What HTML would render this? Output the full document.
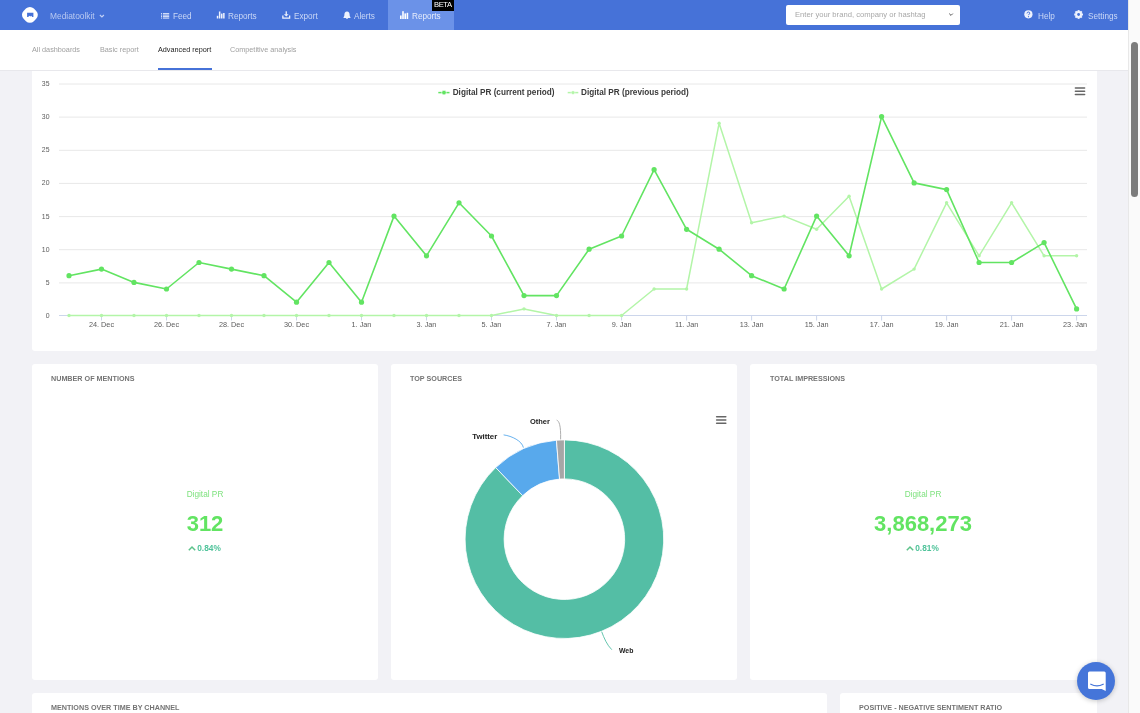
<!DOCTYPE html>
<html><head><meta charset="utf-8">
<style>
*{box-sizing:border-box;margin:0;padding:0}
html,body{width:1140px;height:713px;overflow:hidden;background:#f2f2f6;font-family:"Liberation Sans",sans-serif;position:relative}
.abs{position:absolute}
.nv,.tab,.ct,.big,.dp,.pc,.abs,svg{will-change:transform}
#nav{position:absolute;left:0;top:0;width:1128px;height:30px;background:#4672d8}
.nv{position:absolute;top:10.8px;font-size:8.2px;color:#cbd8f6;white-space:nowrap;line-height:12px}
#sub{position:absolute;left:0;top:30px;width:1128px;height:41px;background:#fff;border-bottom:1px solid #e8e8ec}
.tab{position:absolute;top:45px;font-size:7.25px;color:#a0a0a0;white-space:nowrap;line-height:10px}
.card{position:absolute;background:#fff;border-radius:3px}
.ct{position:absolute;font-size:7.2px;font-weight:bold;color:#747474;white-space:nowrap;line-height:9px}
.yl{font-size:6.9px;fill:#5c5c5c;font-family:"Liberation Sans",sans-serif}
.xl{font-size:7.3px;fill:#5c5c5c;font-family:"Liberation Sans",sans-serif}
.lg{font-size:8.2px;fill:#3a3a3a;font-weight:bold;font-family:"Liberation Sans",sans-serif}
.dl{font-size:7.7px;fill:#222;font-weight:bold;font-family:"Liberation Sans",sans-serif}
.big{position:absolute;font-size:22px;font-weight:bold;color:#62e462;white-space:nowrap;line-height:24px;text-align:center}
.dp{position:absolute;font-size:8.25px;color:#7fe27f;white-space:nowrap;line-height:12px;text-align:center}
.pc{position:absolute;font-size:8.3px;font-weight:bold;color:#4fc39a;white-space:nowrap;line-height:10px;text-align:center}
#sb{position:absolute;left:1128px;top:0;width:12px;height:713px;background:#fafafa;border-left:1px solid #e8e8e8}
#thumb{position:absolute;left:1131px;top:42px;width:7px;height:155px;background:#7c7c7c;border-radius:4px}
</style></head><body>
<div id="sb"></div><div id="thumb"></div>
<!-- row1 card -->
<div class="card" style="left:32px;top:40px;width:1065px;height:311px"></div>
<!-- row2 -->
<div class="card" style="left:32px;top:364px;width:346px;height:316px"></div>
<div class="card" style="left:391px;top:364px;width:346px;height:316px"></div>
<div class="card" style="left:750px;top:364px;width:347px;height:316px"></div>
<!-- row3 -->
<div class="card" style="left:32px;top:693px;width:795px;height:40px"></div>
<div class="card" style="left:840px;top:693px;width:257px;height:40px"></div>
<div class="ct" style="left:50.5px;top:373.5px">NUMBER OF MENTIONS</div>
<div class="ct" style="left:410px;top:373.5px">TOP SOURCES</div>
<div class="ct" style="left:769.5px;top:373.5px">TOTAL IMPRESSIONS</div>
<div class="ct" style="left:50.5px;top:702.5px">MENTIONS OVER TIME BY CHANNEL</div>
<div class="ct" style="left:859px;top:702.5px">POSITIVE - NEGATIVE SENTIMENT RATIO</div>
<div class="dp" style="left:155px;width:100px;top:489px">Digital PR</div>
<div class="big" style="left:105px;width:200px;top:511.5px">312</div>
<div class="pc" style="left:155px;width:100px;top:543px"><span style="display:inline-block;width:8px"></span>0.84%</div>
<div class="dp" style="left:873px;width:100px;top:489px">Digital PR</div>
<div class="big" style="left:823px;width:200px;top:511.5px">3,868,273</div>
<div class="pc" style="left:873px;width:100px;top:543px"><span style="display:inline-block;width:8px"></span>0.81%</div>
<svg class="abs" style="left:0;top:0" width="1140" height="713" viewBox="0 0 1140 713">
<line x1="59" y1="282.9" x2="1087" y2="282.9" stroke="#e8e8e8" stroke-width="1"/>
<line x1="59" y1="249.7" x2="1087" y2="249.7" stroke="#e8e8e8" stroke-width="1"/>
<line x1="59" y1="216.6" x2="1087" y2="216.6" stroke="#e8e8e8" stroke-width="1"/>
<line x1="59" y1="183.4" x2="1087" y2="183.4" stroke="#e8e8e8" stroke-width="1"/>
<line x1="59" y1="150.3" x2="1087" y2="150.3" stroke="#e8e8e8" stroke-width="1"/>
<line x1="59" y1="117.1" x2="1087" y2="117.1" stroke="#e8e8e8" stroke-width="1"/>
<line x1="59" y1="84.0" x2="1087" y2="84.0" stroke="#e8e8e8" stroke-width="1"/>
<text x="49.5" y="318.0" text-anchor="end" class="yl">0</text>
<text x="49.5" y="284.9" text-anchor="end" class="yl">5</text>
<text x="49.5" y="251.7" text-anchor="end" class="yl">10</text>
<text x="49.5" y="218.6" text-anchor="end" class="yl">15</text>
<text x="49.5" y="185.4" text-anchor="end" class="yl">20</text>
<text x="49.5" y="152.3" text-anchor="end" class="yl">25</text>
<text x="49.5" y="119.1" text-anchor="end" class="yl">30</text>
<text x="49.5" y="86.0" text-anchor="end" class="yl">35</text>
<line x1="59" y1="315.5" x2="1087" y2="315.5" stroke="#ccd6eb" stroke-width="1"/>
<line x1="101.5" y1="315.5" x2="101.5" y2="320.5" stroke="#ccd6eb" stroke-width="1"/>
<text x="101.5" y="327.0" text-anchor="middle" class="xl">24. Dec</text>
<line x1="166.5" y1="315.5" x2="166.5" y2="320.5" stroke="#ccd6eb" stroke-width="1"/>
<text x="166.5" y="327.0" text-anchor="middle" class="xl">26. Dec</text>
<line x1="231.5" y1="315.5" x2="231.5" y2="320.5" stroke="#ccd6eb" stroke-width="1"/>
<text x="231.5" y="327.0" text-anchor="middle" class="xl">28. Dec</text>
<line x1="296.5" y1="315.5" x2="296.5" y2="320.5" stroke="#ccd6eb" stroke-width="1"/>
<text x="296.5" y="327.0" text-anchor="middle" class="xl">30. Dec</text>
<line x1="361.5" y1="315.5" x2="361.5" y2="320.5" stroke="#ccd6eb" stroke-width="1"/>
<text x="361.5" y="327.0" text-anchor="middle" class="xl">1. Jan</text>
<line x1="426.5" y1="315.5" x2="426.5" y2="320.5" stroke="#ccd6eb" stroke-width="1"/>
<text x="426.5" y="327.0" text-anchor="middle" class="xl">3. Jan</text>
<line x1="491.5" y1="315.5" x2="491.5" y2="320.5" stroke="#ccd6eb" stroke-width="1"/>
<text x="491.5" y="327.0" text-anchor="middle" class="xl">5. Jan</text>
<line x1="556.5" y1="315.5" x2="556.5" y2="320.5" stroke="#ccd6eb" stroke-width="1"/>
<text x="556.5" y="327.0" text-anchor="middle" class="xl">7. Jan</text>
<line x1="621.6" y1="315.5" x2="621.6" y2="320.5" stroke="#ccd6eb" stroke-width="1"/>
<text x="621.6" y="327.0" text-anchor="middle" class="xl">9. Jan</text>
<line x1="686.6" y1="315.5" x2="686.6" y2="320.5" stroke="#ccd6eb" stroke-width="1"/>
<text x="686.6" y="327.0" text-anchor="middle" class="xl">11. Jan</text>
<line x1="751.6" y1="315.5" x2="751.6" y2="320.5" stroke="#ccd6eb" stroke-width="1"/>
<text x="751.6" y="327.0" text-anchor="middle" class="xl">13. Jan</text>
<line x1="816.6" y1="315.5" x2="816.6" y2="320.5" stroke="#ccd6eb" stroke-width="1"/>
<text x="816.6" y="327.0" text-anchor="middle" class="xl">15. Jan</text>
<line x1="881.6" y1="315.5" x2="881.6" y2="320.5" stroke="#ccd6eb" stroke-width="1"/>
<text x="881.6" y="327.0" text-anchor="middle" class="xl">17. Jan</text>
<line x1="946.6" y1="315.5" x2="946.6" y2="320.5" stroke="#ccd6eb" stroke-width="1"/>
<text x="946.6" y="327.0" text-anchor="middle" class="xl">19. Jan</text>
<line x1="1011.6" y1="315.5" x2="1011.6" y2="320.5" stroke="#ccd6eb" stroke-width="1"/>
<text x="1011.6" y="327.0" text-anchor="middle" class="xl">21. Jan</text>
<line x1="1076.6" y1="315.5" x2="1076.6" y2="320.5" stroke="#ccd6eb" stroke-width="1"/>
<text x="1087" y="327.0" text-anchor="end" class="xl">23. Jan</text>
<polyline points="69.0,315.5 101.5,315.5 134.0,315.5 166.5,315.5 199.0,315.5 231.5,315.5 264.0,315.5 296.5,315.5 329.0,315.5 361.5,315.5 394.0,315.5 426.5,315.5 459.0,315.5 491.5,315.5 524.0,308.9 556.5,315.5 589.1,315.5 621.6,315.5 654.1,289.0 686.6,289.0 719.1,123.3 751.6,222.7 784.1,216.1 816.6,229.3 849.1,196.2 881.6,289.0 914.1,269.1 946.6,202.8 979.1,255.8 1011.6,202.8 1044.1,255.8 1076.6,255.8" fill="none" stroke="#b3f5a8" stroke-width="1.5" stroke-linejoin="round"/>
<circle cx="69.0" cy="315.5" r="1.7" fill="#b3f5a8"/>
<circle cx="101.5" cy="315.5" r="1.7" fill="#b3f5a8"/>
<circle cx="134.0" cy="315.5" r="1.7" fill="#b3f5a8"/>
<circle cx="166.5" cy="315.5" r="1.7" fill="#b3f5a8"/>
<circle cx="199.0" cy="315.5" r="1.7" fill="#b3f5a8"/>
<circle cx="231.5" cy="315.5" r="1.7" fill="#b3f5a8"/>
<circle cx="264.0" cy="315.5" r="1.7" fill="#b3f5a8"/>
<circle cx="296.5" cy="315.5" r="1.7" fill="#b3f5a8"/>
<circle cx="329.0" cy="315.5" r="1.7" fill="#b3f5a8"/>
<circle cx="361.5" cy="315.5" r="1.7" fill="#b3f5a8"/>
<circle cx="394.0" cy="315.5" r="1.7" fill="#b3f5a8"/>
<circle cx="426.5" cy="315.5" r="1.7" fill="#b3f5a8"/>
<circle cx="459.0" cy="315.5" r="1.7" fill="#b3f5a8"/>
<circle cx="491.5" cy="315.5" r="1.7" fill="#b3f5a8"/>
<circle cx="524.0" cy="308.9" r="1.7" fill="#b3f5a8"/>
<circle cx="556.5" cy="315.5" r="1.7" fill="#b3f5a8"/>
<circle cx="589.1" cy="315.5" r="1.7" fill="#b3f5a8"/>
<circle cx="621.6" cy="315.5" r="1.7" fill="#b3f5a8"/>
<circle cx="654.1" cy="289.0" r="1.7" fill="#b3f5a8"/>
<circle cx="686.6" cy="289.0" r="1.7" fill="#b3f5a8"/>
<circle cx="719.1" cy="123.3" r="1.7" fill="#b3f5a8"/>
<circle cx="751.6" cy="222.7" r="1.7" fill="#b3f5a8"/>
<circle cx="784.1" cy="216.1" r="1.7" fill="#b3f5a8"/>
<circle cx="816.6" cy="229.3" r="1.7" fill="#b3f5a8"/>
<circle cx="849.1" cy="196.2" r="1.7" fill="#b3f5a8"/>
<circle cx="881.6" cy="289.0" r="1.7" fill="#b3f5a8"/>
<circle cx="914.1" cy="269.1" r="1.7" fill="#b3f5a8"/>
<circle cx="946.6" cy="202.8" r="1.7" fill="#b3f5a8"/>
<circle cx="979.1" cy="255.8" r="1.7" fill="#b3f5a8"/>
<circle cx="1011.6" cy="202.8" r="1.7" fill="#b3f5a8"/>
<circle cx="1044.1" cy="255.8" r="1.7" fill="#b3f5a8"/>
<circle cx="1076.6" cy="255.8" r="1.7" fill="#b3f5a8"/>
<polyline points="69.0,275.7 101.5,269.1 134.0,282.4 166.5,289.0 199.0,262.5 231.5,269.1 264.0,275.7 296.5,302.2 329.0,262.5 361.5,302.2 394.0,216.1 426.5,255.8 459.0,202.8 491.5,236.0 524.0,295.6 556.5,295.6 589.1,249.2 621.6,236.0 654.1,169.7 686.6,229.3 719.1,249.2 751.6,275.7 784.1,289.0 816.6,216.1 849.1,255.8 881.6,116.6 914.1,182.9 946.6,189.6 979.1,262.5 1011.6,262.5 1044.1,242.6 1076.6,308.9" fill="none" stroke="#62e462" stroke-width="1.6" stroke-linejoin="round"/>
<circle cx="69.0" cy="275.7" r="2.6" fill="#62e462"/>
<circle cx="101.5" cy="269.1" r="2.6" fill="#62e462"/>
<circle cx="134.0" cy="282.4" r="2.6" fill="#62e462"/>
<circle cx="166.5" cy="289.0" r="2.6" fill="#62e462"/>
<circle cx="199.0" cy="262.5" r="2.6" fill="#62e462"/>
<circle cx="231.5" cy="269.1" r="2.6" fill="#62e462"/>
<circle cx="264.0" cy="275.7" r="2.6" fill="#62e462"/>
<circle cx="296.5" cy="302.2" r="2.6" fill="#62e462"/>
<circle cx="329.0" cy="262.5" r="2.6" fill="#62e462"/>
<circle cx="361.5" cy="302.2" r="2.6" fill="#62e462"/>
<circle cx="394.0" cy="216.1" r="2.6" fill="#62e462"/>
<circle cx="426.5" cy="255.8" r="2.6" fill="#62e462"/>
<circle cx="459.0" cy="202.8" r="2.6" fill="#62e462"/>
<circle cx="491.5" cy="236.0" r="2.6" fill="#62e462"/>
<circle cx="524.0" cy="295.6" r="2.6" fill="#62e462"/>
<circle cx="556.5" cy="295.6" r="2.6" fill="#62e462"/>
<circle cx="589.1" cy="249.2" r="2.6" fill="#62e462"/>
<circle cx="621.6" cy="236.0" r="2.6" fill="#62e462"/>
<circle cx="654.1" cy="169.7" r="2.6" fill="#62e462"/>
<circle cx="686.6" cy="229.3" r="2.6" fill="#62e462"/>
<circle cx="719.1" cy="249.2" r="2.6" fill="#62e462"/>
<circle cx="751.6" cy="275.7" r="2.6" fill="#62e462"/>
<circle cx="784.1" cy="289.0" r="2.6" fill="#62e462"/>
<circle cx="816.6" cy="216.1" r="2.6" fill="#62e462"/>
<circle cx="849.1" cy="255.8" r="2.6" fill="#62e462"/>
<circle cx="881.6" cy="116.6" r="2.6" fill="#62e462"/>
<circle cx="914.1" cy="182.9" r="2.6" fill="#62e462"/>
<circle cx="946.6" cy="189.6" r="2.6" fill="#62e462"/>
<circle cx="979.1" cy="262.5" r="2.6" fill="#62e462"/>
<circle cx="1011.6" cy="262.5" r="2.6" fill="#62e462"/>
<circle cx="1044.1" cy="242.6" r="2.6" fill="#62e462"/>
<circle cx="1076.6" cy="308.9" r="2.6" fill="#62e462"/>
<line x1="438.3" y1="92.6" x2="449.5" y2="92.6" stroke="#62e462" stroke-width="1.5"/><circle cx="444" cy="92.6" r="2.3" fill="#62e462" stroke="#fff" stroke-width="0.6"/>
<text x="452.7" y="95.2" class="lg">Digital PR (current period)</text>
<line x1="567.7" y1="92.6" x2="578.3" y2="92.6" stroke="#b3f5a8" stroke-width="1.5"/><circle cx="573" cy="92.6" r="1.9" fill="#b3f5a8" stroke="#fff" stroke-width="0.5"/>
<text x="581" y="95.2" class="lg">Digital PR (previous period)</text>
<line x1="1075.4" y1="87.90" x2="1084.6000000000001" y2="87.90" stroke="#666" stroke-width="1.5" stroke-linecap="round"/><line x1="1075.4" y1="91.15" x2="1084.6000000000001" y2="91.15" stroke="#666" stroke-width="1.5" stroke-linecap="round"/><line x1="1075.4" y1="94.40" x2="1084.6000000000001" y2="94.40" stroke="#666" stroke-width="1.5" stroke-linecap="round"/>
<line x1="716.6" y1="416.80" x2="725.8000000000001" y2="416.80" stroke="#666" stroke-width="1.5" stroke-linecap="round"/><line x1="716.6" y1="420.05" x2="725.8000000000001" y2="420.05" stroke="#666" stroke-width="1.5" stroke-linecap="round"/><line x1="716.6" y1="423.30" x2="725.8000000000001" y2="423.30" stroke="#666" stroke-width="1.5" stroke-linecap="round"/><path d="M564.40,439.90 A99.3,99.3 0 1 1 495.67,467.53 L522.66,495.68 A60.3,60.3 0 1 0 564.40,478.90 Z" fill="#54bea5" stroke="#fff" stroke-width="0.8" stroke-linejoin="round"/>
<path d="M495.67,467.53 A99.3,99.3 0 0 1 556.44,440.22 L559.56,479.09 A60.3,60.3 0 0 0 522.66,495.68 Z" fill="#58a9ec" stroke="#fff" stroke-width="0.8" stroke-linejoin="round"/>
<path d="M556.44,440.22 A99.3,99.3 0 0 1 564.40,439.90 L564.40,478.90 A60.3,60.3 0 0 0 559.56,479.09 Z" fill="#a6a6a6" stroke="#fff" stroke-width="0.8" stroke-linejoin="round"/>
<path d="M503.6,434.9 C512,436 522,441 523.4,447.6" fill="none" stroke="#58a9ec" stroke-width="0.9"/>
<path d="M556.7,420.1 C559,421 561,425 560.6,439.4" fill="none" stroke="#a6a6a6" stroke-width="0.9"/>
<path d="M601.7,631.7 C604,638 607,645 611.8,649.7" fill="none" stroke="#54bea5" stroke-width="0.9"/>
<text x="472.2" y="439" class="dl" textLength="25.1" lengthAdjust="spacingAndGlyphs">Twitter</text>
<text x="529.9" y="424.3" class="dl" textLength="20" lengthAdjust="spacingAndGlyphs">Other</text>
<text x="619" y="652.9" class="dl" textLength="14.4" lengthAdjust="spacingAndGlyphs">Web</text></svg>
<div id="sub"></div>
<div class="tab" style="left:31.8px">All dashboards</div>
<div class="tab" style="left:100.3px">Basic report</div>
<div class="tab" style="left:158.2px;color:#222">Advanced report</div>
<div class="tab" style="left:229.7px">Competitive analysis</div>
<div class="abs" style="left:158px;top:67.5px;width:53.5px;height:2px;background:#4672d8"></div>
<div id="nav"></div>
<div class="abs" style="left:388px;top:0;width:66px;height:30px;background:#6b92e8"></div>
<div class="abs" style="left:432px;top:0;width:21.7px;height:11px;background:#000;color:#fff;font-size:7.6px;letter-spacing:-0.4px;line-height:10.5px;text-align:center">BETA</div>
<div class="nv" style="left:50px;top:10.4px;font-size:8.4px;color:#b9c9f1">Mediatoolkit</div>
<div class="nv" style="left:172.5px">Feed</div>
<div class="nv" style="left:228.3px">Reports</div>
<div class="nv" style="left:293.8px">Export</div>
<div class="nv" style="left:353.8px">Alerts</div>
<div class="nv" style="left:412px;color:#e6ecfb">Reports</div>
<div class="nv" style="left:1038px">Help</div>
<div class="nv" style="left:1088px">Settings</div>
<div class="abs" style="left:786px;top:5px;width:174px;height:19.5px;background:#fff;border-radius:2px"></div>
<div class="abs" style="left:794.7px;top:10px;font-size:7.65px;line-height:10px;color:#a8a8a8;white-space:nowrap">Enter your brand, company or hashtag</div>
<div class="abs" style="left:1077px;top:662px;width:38px;height:38px;border-radius:50%;background:#4575d9;box-shadow:0 1px 5px rgba(0,0,0,0.22)"></div>
<svg class="abs" style="left:0;top:0" width="1140" height="713" viewBox="0 0 1140 713">
<!-- logo -->
<rect x="22.65" y="7.6" width="14.5" height="14.5" rx="5.6" fill="#fff" transform="rotate(45 29.9 14.85)"/>
<path d="M27.1,12.8 H33.4 V17 L32.3,16.9 L31.2,15.7 L30.25,16.5 L29.3,15.7 L28.2,16.9 L27.1,17 Z" fill="#4672d8"/>
<polyline points="99.9,15 101.9,17 103.9,15" fill="none" stroke="#c0cff5" stroke-width="1.2"/>
<!-- feed -->
<g fill="#dfe7fb">
<rect x="161" y="13.1" width="1.1" height="1"/><rect x="161" y="14.6" width="1.1" height="1"/><rect x="161" y="16.1" width="1.1" height="1"/><rect x="161" y="17.6" width="1.1" height="1"/>
<rect x="163" y="13.1" width="6.2" height="1"/><rect x="163" y="14.6" width="6.2" height="1"/><rect x="163" y="16.1" width="6.2" height="1"/><rect x="163" y="17.6" width="6.2" height="1"/>
</g>
<!-- reports icon -->
<g fill="#eef2fd">
<rect x="216.8" y="15.8" width="1.5" height="2.7"/><rect x="218.9" y="11.5" width="1.5" height="7"/><rect x="221" y="13.6" width="1.5" height="4.9"/><rect x="223.1" y="13" width="1.5" height="5.5"/>
</g>
<g fill="#fff">
<rect x="400" y="15.5" width="1.6" height="3.5"/><rect x="402.2" y="11.2" width="1.6" height="7.8"/><rect x="404.4" y="13.4" width="1.6" height="5.6"/><rect x="406.6" y="12.8" width="1.6" height="6.2"/>
</g>
<!-- export -->
<g fill="#eef2fd">
<path d="M282.2,15.5 h1.3 v1.9 h5.5 v-1.9 h1.3 v3.2 h-8.1 Z"/>
<rect x="285.6" y="11.3" width="1.3" height="3.5"/>
<path d="M283.9,14.2 h4.7 l-2.35,2.4 Z"/>
</g>
<!-- bell -->
<path d="M347,11.4 c-1.9,0 -2.6,1.6 -2.6,3.2 c0,1.5 -0.4,2.3 -0.9,2.8 v0.6 h7 v-0.6 c-0.5,-0.5 -0.9,-1.3 -0.9,-2.8 c0,-1.6 -0.7,-3.2 -2.6,-3.2 Z M346,18.2 h2 c0,0.6 -0.45,0.9 -1,0.9 c-0.55,0 -1,-0.3 -1,-0.9 Z" fill="#eef2fd"/>
<!-- help -->
<circle cx="1028.4" cy="14.35" r="4.1" fill="#eef2fd"/>
<path d="M1027,13.4 c0,-0.9 0.6,-1.4 1.4,-1.4 c0.8,0 1.4,0.5 1.4,1.2 c0,0.9 -1.3,1 -1.3,2" fill="none" stroke="#4672d8" stroke-width="1"/>
<circle cx="1028.5" cy="16.7" r="0.6" fill="#4672d8"/>
<!-- gear -->
<g transform="translate(1078.6 14.5)" fill="#eef2fd">
<circle r="3.4"/>
<rect x="-1" y="-4.4" width="2" height="8.8"/>
<rect x="-1" y="-4.4" width="2" height="8.8" transform="rotate(45)"/>
<rect x="-1" y="-4.4" width="2" height="8.8" transform="rotate(90)"/>
<rect x="-1" y="-4.4" width="2" height="8.8" transform="rotate(135)"/>
<circle r="1.4" fill="#4672d8"/>
</g>
<polyline points="949.2,13.6 951,15.4 952.8,13.6" fill="none" stroke="#555" stroke-width="1"/>
<!-- percent carets -->
<polyline points="188.8,550.2 192,547 195.2,550.2" fill="none" stroke="#5cc38a" stroke-width="1.5"/>
<polyline points="906.8,550.2 910,547 913.2,550.2" fill="none" stroke="#5cc38a" stroke-width="1.5"/>
<!-- chat -->
<path d="M1089.5,671.4 h14.7 a1.5,1.5 0 0 1 1.5,1.5 v18.1 l-4,-2 h-12.2 a1.5,1.5 0 0 1 -1.5,-1.5 v-14.6 a1.5,1.5 0 0 1 1.5,-1.5 Z" fill="#fff"/>
<path d="M1090.8,684.2 q6.2,3.4 12.4,0" fill="none" stroke="#4575d9" stroke-width="1.3" stroke-linecap="round"/>
</svg>
</body></html>
